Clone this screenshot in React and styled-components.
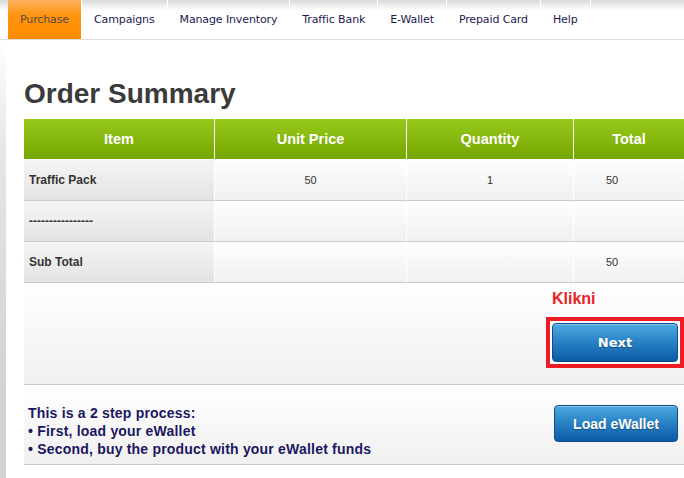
import styled, { createGlobalStyle } from 'styled-components';

const GlobalStyle = createGlobalStyle`
    body {
        margin: 0;
        background: #fff;
        font-family: "Liberation Sans", Arial, sans-serif;
    }
`

const Page = styled.div`
    display: flex;
    flex-direction: column;
    min-height: 100vh;
`

const NavBar = styled.div`
    display: flex;
    height: 39px;
    padding-left: 8px;
    border-bottom: 1px solid #dedede;
    background: linear-gradient(to bottom, #d9d9d9 0px, #f4f4f4 7px, #fff 11px, #fff 100%);
`

const Tab = styled.div`
    padding: 0 12px;
    line-height: 39px;
    border-right: 1px solid #fff;
    font-family: "DejaVu Sans", Verdana, sans-serif;
    font-size: 11px;
    letter-spacing: -0.12px;
    color: ${p => p.$active ? '#5a4a3a' : '#1c1a4e'};
    background: ${p => p.$active
        ? 'linear-gradient(to bottom, #fbb25c 0%, #ff9410 40%, #ff8c00 100%)'
        : 'transparent'};
    white-space: nowrap;
`

const Body = styled.div`
    flex: 1;
    display: flex;
`

const SideShade = styled.div`
    width: 6px;
    flex-shrink: 0;
    background: linear-gradient(to bottom, #fff 0%, #e6e6e6 25%, #d2d2d2 80%);
`

const Main = styled.div`
    padding: 38px 0 0 18px;
`

const Title = styled.h1`
    margin: 0 0 10px;
    font-size: 28px;
    font-weight: 700;
    line-height: 31px;
    color: #3b3b3b;
`

const Table = styled.table`
    width: 660px;
    table-layout: fixed;
    border-collapse: separate;
    border-spacing: 0;
`

const HeadCell = styled.th`
    box-sizing: border-box;
    height: 41px;
    padding: 0;
    border-left: ${p => p.$first ? 'none' : '1px solid #fff'};
    border-bottom: 1px solid #fff;
    background: linear-gradient(to bottom, #97ca1c 0%, #86b70e 50%, #76a703 100%);
    color: #fff;
    font-size: 14.5px;
    font-weight: 700;
    text-align: center;
`

const LabelCell = styled.td`
    box-sizing: border-box;
    height: 41px;
    padding: 0 0 0 5px;
    border-bottom: 1px solid #cbcbcb;
    background: linear-gradient(to bottom, #f5f5f5 0%, #e3e3e3 100%);
    color: #333;
    font-size: 12px;
    font-weight: 700;
`

const ValueCell = styled.td`
    box-sizing: border-box;
    height: 41px;
    padding: 0 ${p => p.$shift || 0}px 0 0;
    border-left: 1px solid #fff;
    border-bottom: 1px solid #cbcbcb;
    background: linear-gradient(to bottom, #fefefe 0%, #f0f0f0 100%);
    color: #333;
    font-size: 11px;
    text-align: center;
`

const WideCell = styled.td`
    box-sizing: border-box;
    height: ${p => p.$h}px;
    padding: 0;
    border-bottom: 1px solid #cbcbcb;
    background: linear-gradient(to bottom, #fff 0%, #f0f0f0 100%);
    vertical-align: top;
`

const ActionRow = styled.div`
    display: flex;
    justify-content: flex-end;
    padding-top: 7px;
`

const ActionColumn = styled.div`
    display: flex;
    flex-direction: column;
`

const Hint = styled.div`
    padding-left: 6px;
    margin-bottom: 9px;
    font-size: 16px;
    line-height: 18px;
    font-weight: 700;
    color: #ea1f27;
`

const Frame = styled.div`
    border: 4px solid #ed1c24;
    padding: 2px;
    background: #fff;
`

const BlueButton = styled.button`
    display: flex;
    align-items: center;
    justify-content: center;
    box-sizing: border-box;
    width: ${p => p.$w}px;
    height: ${p => p.$h}px;
    padding: 0;
    border: 1px solid #0b4d8c;
    border-radius: 4px;
    background: linear-gradient(to bottom, #4eaae0 0%, #2a84c6 45%, #0b5ba6 100%);
    box-shadow: inset 0 1px 0 rgba(255, 255, 255, 0.35);
    color: #fff;
    font-family: ${p => p.$rounded ? '"DejaVu Sans", Verdana, sans-serif' : '"Liberation Sans", Arial, sans-serif'};
    font-size: ${p => p.$rounded ? 13 : 14}px;
    font-weight: 700;
    text-shadow: 0 1px 1px rgba(0, 0, 0, 0.35);
    cursor: pointer;
`

const InfoRow = styled.div`
    display: flex;
    justify-content: space-between;
    align-items: flex-start;
    padding: 19px 6px 0 4px;
`

const Steps = styled.div`
    color: #1b1762;
    font-size: 14px;
    font-weight: 700;
    line-height: 18px;
    letter-spacing: 0.2px;
`

const LoadWrap = styled.div`
    padding-top: 1px;
`

const tabs = ['Purchase', 'Campaigns', 'Manage Inventory', 'Traffic Bank', 'E-Wallet', 'Prepaid Card', 'Help']

const App = () => {
    return (
        <Page>
            <GlobalStyle />
            <NavBar>
                {tabs.map((t, i) => (
                    <Tab key={t} $active={i === 0}>{t}</Tab>
                ))}
            </NavBar>
            <Body>
                <SideShade />
                <Main>
                    <Title>Order Summary</Title>
                    <Table>
                        <colgroup>
                            <col style={{ width: '190px' }} />
                            <col style={{ width: '192px' }} />
                            <col style={{ width: '167px' }} />
                            <col style={{ width: '111px' }} />
                        </colgroup>
                        <thead>
                            <tr>
                                <HeadCell $first>Item</HeadCell>
                                <HeadCell>Unit Price</HeadCell>
                                <HeadCell>Quantity</HeadCell>
                                <HeadCell>Total</HeadCell>
                            </tr>
                        </thead>
                        <tbody>
                            <tr>
                                <LabelCell>Traffic Pack</LabelCell>
                                <ValueCell>50</ValueCell>
                                <ValueCell>1</ValueCell>
                                <ValueCell $shift={34}>50</ValueCell>
                            </tr>
                            <tr>
                                <LabelCell>----------------</LabelCell>
                                <ValueCell />
                                <ValueCell />
                                <ValueCell />
                            </tr>
                            <tr>
                                <LabelCell>Sub Total</LabelCell>
                                <ValueCell />
                                <ValueCell />
                                <ValueCell $shift={34}>50</ValueCell>
                            </tr>
                            <tr>
                                <WideCell colSpan={4} $h={102}>
                                    <ActionRow>
                                        <ActionColumn>
                                            <Hint>Klikni</Hint>
                                            <Frame>
                                                <BlueButton $w={126} $h={39} $rounded>Next</BlueButton>
                                            </Frame>
                                        </ActionColumn>
                                    </ActionRow>
                                </WideCell>
                            </tr>
                            <tr>
                                <WideCell colSpan={4} $h={80}>
                                    <InfoRow>
                                        <Steps>
                                            <div>This is a 2 step process:</div>
                                            <div>• First, load your eWallet</div>
                                            <div>• Second, buy the product with your eWallet funds</div>
                                        </Steps>
                                        <LoadWrap>
                                            <BlueButton $w={124} $h={37}>Load eWallet</BlueButton>
                                        </LoadWrap>
                                    </InfoRow>
                                </WideCell>
                            </tr>
                        </tbody>
                    </Table>
                </Main>
            </Body>
        </Page>
    );
}

export default App;
